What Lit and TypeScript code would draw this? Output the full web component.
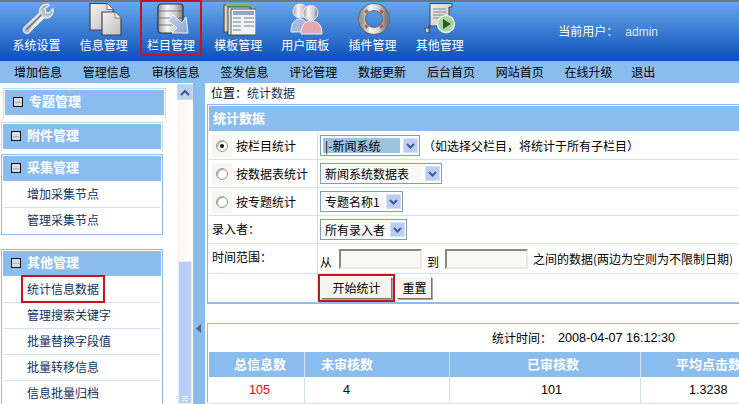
import { LitElement, html, css, svg } from "lit";
import { customElement } from "lit/decorators.js";

const defs = svg`<defs>
<linearGradient id="metal" x1="0" y1="0" x2="1" y2="0"><stop offset="0" stop-color="#9a9a9a"/><stop offset=".35" stop-color="#f6f6f6"/><stop offset=".7" stop-color="#cfcfcf"/><stop offset="1" stop-color="#7d7d7d"/></linearGradient>
<linearGradient id="page" x1="0" y1="0" x2="1" y2="1"><stop offset="0" stop-color="#f4f4f4"/><stop offset="1" stop-color="#bdbdbd"/></linearGradient>
<linearGradient id="wr" x1="0" y1="1" x2="1" y2="0"><stop offset="0" stop-color="#a9a9a9"/><stop offset=".5" stop-color="#e4e4e4"/><stop offset="1" stop-color="#8f8f8f"/></linearGradient>
<linearGradient id="arrow" x1="0" y1="0" x2="1" y2="1"><stop offset="0" stop-color="#c6d2ea"/><stop offset="1" stop-color="#8da3cc"/></linearGradient>
</defs>`;

const icons = [
  svg`<g transform="translate(3 .5) scale(.88)"><path d="M3 28 L20 12 C19 7 22 3 27 2 C29 1.700 30 2 31 3 L26 7 L27 11 L31 12 L35 7 C36 10 35 14 32 16 C29 18 27 18 25 17 L8 34 C6 36 3 35 2 33 C1 31 2 29 3 28Z" fill="url(#wr)" stroke="#e9eef5" stroke-width="1.500"/><path d="M5 31 L22 14" stroke="#6f6f6f" stroke-width="1.600" fill="none"/><path d="M8 32 L24 16" stroke="#fff" stroke-width="1" fill="none"/></g>`,
  svg`<path d="M4 1.500 H21 L27 7.500 V28 H4Z" fill="url(#page)" stroke="#444" stroke-width="1.200"/><path d="M21 1.500 V7.500 H27" fill="#fff" stroke="#777"/><path d="M16 10 H29 L35 16 V33 H16Z" fill="url(#page)" stroke="#444" stroke-width="1.200"/><path d="M29 10 V16 H35" fill="#fff" stroke="#777"/>`,
  svg`<rect x="5" y="2" width="25" height="29" rx="3" fill="url(#metal)" stroke="#333" stroke-width="1.200"/><path d="M5 9 H30 M5 16 H30 M5 23 H30" stroke="#666" stroke-width=".8"/><path d="M15 19 L20 13 L29 21 L33 15 L35 31 L19 31 L24 26Z" fill="url(#arrow)" stroke="#eef2f8" stroke-width="1"/>`,
  svg`<rect x="4" y="3" width="22" height="27" fill="#d8d3b8" stroke="#444"/><rect x="6" y="1" width="24" height="4" fill="#7fb474"/><rect x="8" y="5" width="22" height="28" fill="#dfe3e8" stroke="#444"/><rect x="11" y="7" width="25" height="26" fill="#f2f2f2" stroke="#555"/><rect x="13" y="9" width="21" height="4" fill="#8fa6c6"/><path d="M13 16 H21 M13 20 H21 M13 24 H21 M13 28 H21 M24 16 H34 M24 20 H34 M24 24 H34" stroke="#9aa" stroke-width="1.500"/>`,
  svg`<path d="M4 30 C4 21 8 17 13 17 C18 17 21 21 21 30Z" fill="#a8b8d6" stroke="#eee"/><circle cx="13" cy="9" r="7" fill="url(#metal)" stroke="#eee"/><path d="M14 32 C14 23 18 19 24 19 C31 19 35 23 35 32Z" fill="#e3a9ae" stroke="#eee"/><circle cx="23.500" cy="11" r="7.500" fill="url(#metal)" stroke="#eee"/>`,
  svg`<circle cx="19" cy="17" r="12" fill="none" stroke="#666" stroke-width="8"/><circle cx="19" cy="17" r="12" fill="none" stroke="url(#metal)" stroke-width="6"/><path d="M10.500 8.500 L12.500 10.500 M27.500 8.500 L25.500 10.500 M10.500 25.500 L12.500 23.500 M27.500 25.500 L25.500 23.500" stroke="#d34a4a" stroke-width="3.500"/>`,
  svg`<path d="M8 1.500 H30 V5 H27 V24 H7 V31 C4 31 2.500 29 3.500 26 H8Z" fill="url(#page)" stroke="#444"/><path d="M11 7 H24 M11 10 H24 M11 13 H22 M11 16 H19" stroke="#888"/><circle cx="24" cy="22" r="8.500" fill="#a9d6a0" stroke="#e8efe8" stroke-width="1.500"/><path d="M21 17 L29 22 L21 27Z" fill="#2c5b2a"/>`,
];

@customElement("app-root")
export class AppRoot extends LitElement {
  static styles = css`
    :host { display: block; width: 739px; height: 404px; overflow: hidden; font: 12px/1 "Noto Sans CJK SC", "Liberation Sans", sans-serif; color: #000; background: #fff; }
    .top { height: 59px; border-top: 2px solid #757575; background: linear-gradient(#67a7ea, #0c4fb9); display: flex; padding-left: 3px; color: #fff; }
    .tool { width: 67.200px; display: flex; justify-content: center; }
    .tool div { width: 62px; height: 54px; box-sizing: border-box; display: flex; flex-direction: column; align-items: center; }
    .tool .on { outline: 2px solid #c8141c; outline-offset: -2px; margin-top: -2px; padding-top: 2px; height: 56px; }
    .tool svg { width: 36px; height: 36px; display: block; flex: none; }
    .tool span { line-height: 14px; }
    .user { margin-left: 85px; margin-top: 22px; line-height: 14px; white-space: nowrap; }
    .user b { font: 12px "Liberation Sans", sans-serif; color: #dfe9fa; margin-left: 7px; }
    .sub { height: 22px; background: #8bbcee; display: flex; align-items: center; padding-left: 14px; gap: 20.800px; }
    .sub span:last-child { margin-left: -2px; }
    .main { display: flex; height: 321px; }
    .side { width: 177px; flex: none; height: 321px; overflow: hidden; }
    .panel { width: 162px; margin-left: 1px; border: 1px solid #8bbcee; padding: 1px; box-sizing: border-box; background: #fff; }
    .panel.cut { border-bottom: 0; height: 30px; border-color: #c3daf4; margin-top: 3px; }
    .panel.first { margin-left: 3px; margin-top: 5px; height: 31px; width: 163px; }
    .p3 { margin-top: 2px; }
    .p4 { margin-top: 14px; }
    .ph { height: 25px; box-sizing: content-box; background: #8bbcee; color: #fff; font: 700 13px/1 "Noto Sans CJK SC", sans-serif; display: flex; align-items: center; padding-left: 8px; gap: 6px; border-bottom: 1px solid #fff; }
    .ph > span { margin-top: -5px; }
    .ph i { width: 8px; height: 8px; border: 1px solid #111; background: linear-gradient(#aaa, #aaa) center/6px 1px no-repeat, #d5dbe8; display: block; margin-top: -1px; }
    .row { border-bottom: 1px solid #cfe3f8; padding: 0 0 2px 24px; box-sizing: content-box; height: 23px; display: flex; align-items: center; color: #11325f; }
    .row:last-child { border-bottom: 0; }
    .row span.mark { outline: 2px solid #c8141c; padding: 6px 4px; margin-left: -4px; }
    .bar { width: 16px; flex: none; background: linear-gradient(90deg, #f6f5f0, #fff); display: flex; flex-direction: column; height: 321px; }
    .up { height: 16px; margin-top: 1px; box-sizing: border-box; border: 1px solid #cad7f0; background: #bcd0f6; display: flex; align-items: center; justify-content: center; flex: none; }
    .thumb { margin-top: 161px; flex: 1; background: #b9cef7; border: 1px solid #e8eefb; margin-left: 1px; margin-right: 1px; display: flex; flex-direction: column; justify-content: flex-end; align-items: center; padding-bottom: 2px; gap: 1px; }
    .thumb u { display: block; width: 6px; height: 1px; background: #eef3fd; }
    .split { width: 12px; flex: none; background: #8bbcee; display: flex; align-items: flex-start; }
    .split svg { margin: 241px 0 0 3px; }
    .content { flex: 1; min-width: 0; overflow: hidden; padding: 0 0 0 2px; }
    .loc { height: 21px; display: flex; align-items: center; padding: 0 0 2px 4px; box-sizing: border-box; }
    .loc a { color: #11325f; }
    .form { width: 600px; border: 1px solid #8bbcee; padding: 1px 0 0 1px; box-sizing: border-box; height: 200px; border-bottom-width: 2px; }
    .title { background: #8bbcee; color: #fff; font: 700 13px/1 "Noto Sans CJK SC", sans-serif; display: flex; align-items: center; padding: 0 0 2px 4px; box-sizing: content-box; height: 23px; border-bottom: 1px solid #fff; }
    .fr { display: grid; grid-template-columns: 109px 1fr; border-bottom: 1px solid #cfe3f8; height: 27px; }
    .fr.tall { height: 29px; }
    .fr.last { border-bottom: 0; height: 29px; }
    .fr > div { display: flex; align-items: center; }
    .fr > div:first-child { border-right: 1px solid #cfe3f8; padding-left: 3px; }
    .fr > div:last-child { padding-left: 2px; gap: 5px; }
    .up1 { margin-top: -2px; }
    .up2 { margin-top: -4px; }
    .low { margin: 6px 2px 0 0; }
    .radiobox { width: 20px; height: 22px; background: #f7f6f2; display: flex; align-items: center; justify-content: center; margin-right: 4px; }
    .radio { width: 10px; height: 10px; border-radius: 50%; border: 1px solid #9a9a92; background: #fff; display: flex; align-items: center; justify-content: center; box-shadow: inset 1px 1px 1px #aaa; }
    .radio.on::after { content: ""; width: 4px; height: 4px; border-radius: 50%; background: #111; }
    .sel { display: inline-flex; height: 21px; box-sizing: border-box; border: 1px solid #7f9db9; padding: 2px 1px 2px 2px; align-items: stretch; background: #fff; flex: none; }
    .sel span { display: flex; align-items: center; padding-left: 2px; background: #f8f8f8; box-sizing: border-box; }
    .sel.hl span { background: #9dc3e0; }
    .sel i { width: 15px; margin-left: 3px; background: #b9cdf5; border: 1px solid #d6e1f8; box-sizing: border-box; display: flex; align-items: center; justify-content: center; }
    .w1 span { width: 77px; } .w2 span { width: 99px; } .w3 span { width: 60px; } .w4 span { width: 64px; }
    .note { margin-left: -2px; }
    .date { width: 83px; height: 20px; box-sizing: border-box; border: 2px solid; border-color: #8b8878 #ece9d8 #ece9d8 #8b8878; background: #f8f8f6; display: block; }
    .date + .low { margin-right: 1px; }
    .btnrow { align-items: flex-start !important; padding-top: 3px; }
    .btn { height: 22px; box-sizing: border-box; background: #f5f5f0; border: 1px solid; border-color: #f5f5f0 #77776a #77776a #f5f5f0; box-shadow: 1px 1px 0 #aaa; display: flex; align-items: center; justify-content: center; }
    .go { width: 71px; outline: 2px solid #c8141c; outline-offset: 1px; margin-left: 1px; }
    .reset { width: 35px; }
    .stat { margin-top: 19px; width: 600px; border: 1px solid #8bbcee; border-bottom: 0; padding: 1px 0 0 1px; box-sizing: border-box; height: 80px; }
    .time { height: 26px; display: flex; align-items: center; padding-left: 283px; gap: 6px; border-bottom: 1px solid #fff; }
    .time b { font: 12.600px "Liberation Sans", sans-serif; }
    .cols { display: grid; grid-template-columns: 96px 145px 191px 1fr; }
    .cols > div { display: flex; align-items: center; justify-content: flex-start; border-right: 1px solid #cfe3f8; box-sizing: border-box; }
    .cols.h > div { height: 26px; background: #8bbcee; color: #fff; font: 700 13px/1 "Noto Sans CJK SC", sans-serif; border-right-color: #d6e6f8; border-bottom: 1px solid #fff; padding-bottom: 3px; }
    .cols.b > div { height: 26px; border-bottom: 1px solid #cfe3f8; font-family: "Liberation Sans", sans-serif; font-size: 12.600px; }
    .h > div:nth-child(1) { padding-left: 25px; }
    .h > div:nth-child(2) { padding-left: 16px; }
    .h > div:nth-child(3) { padding-left: 77px; }
    .h > div:nth-child(4) { padding-left: 35px; }
    .b > div:nth-child(1) { padding-left: 40px; }
    .b > div:nth-child(2) { padding-left: 38px; }
    .b > div:nth-child(3) { padding-left: 91px; }
    .b > div:nth-child(4) { padding-left: 48px; }
    .red { color: #f00; }
  `;

  private arrow() {
    return html`<svg width="9" height="6" viewBox="0 0 9 6"><path d="M1 1 L4.500 4.500 L8 1" fill="none" stroke="#3f5a96" stroke-width="2"/></svg>`;
  }

  private tools = ["系统设置", "信息管理", "栏目管理", "模板管理", "用户面板", "插件管理", "其他管理"];
  private subs = ["增加信息", "管理信息", "审核信息", "签发信息", "评论管理", "数据更新", "后台首页", "网站首页", "在线升级", "退出"];

  render() {
    return html`
      <div class="top">
        ${this.tools.map((t, i) => html`<div class="tool"><div class=${i === 2 ? "on" : ""}><svg viewBox="0 0 36 36">${i === 0 ? defs : ""}${icons[i]}</svg><span>${t}</span></div></div>`)}
        <div class="user">当前用户：<b>admin</b></div>
      </div>
      <div class="sub">${this.subs.map((s) => html`<span>${s}</span>`)}</div>
      <div class="main">
        <div class="side">
          <div class="panel cut first"><div class="ph"><i></i><span>专题管理</span></div></div>
          <div class="panel cut"><div class="ph"><i></i><span>附件管理</span></div></div>
          <div class="panel p3"><div class="ph"><i></i><span>采集管理</span></div><div class="row">增加采集节点</div><div class="row">管理采集节点</div></div>
          <div class="panel p4"><div class="ph"><i></i><span>其他管理</span></div>
            <div class="row"><span class="mark">统计信息数据</span></div>
            <div class="row">管理搜索关键字</div><div class="row">批量替换字段值</div><div class="row">批量转移信息</div><div class="row">信息批量归档</div>
          </div>
        </div>
        <div class="bar">
          <div class="up"><svg width="10" height="7" viewBox="0 0 10 7"><path d="M1 6 L5 2 L9 6" fill="none" stroke="#3f5a86" stroke-width="2"/></svg></div>
          <div class="thumb"><u></u><u></u><u></u></div>
        </div>
        <div class="split"><svg width="5" height="9" viewBox="0 0 5 9"><path d="M5 0 V9 L0 4.500Z" fill="#55657a"/></svg></div>
        <div class="content">
          <div class="loc"><span>位置：</span><a>统计数据</a></div>
          <div class="form">
            <div class="title">统计数据</div>
            <div class="fr"><div><span class="radiobox"><span class="radio on"></span></span>按栏目统计</div><div><span class="sel hl w1"><span>|-新闻系统</span><i>${this.arrow()}</i></span><span class="note">（如选择父栏目，将统计于所有子栏目）</span></div></div>
            <div class="fr"><div><span class="radiobox"><span class="radio"></span></span>按数据表统计</div><div><span class="sel w2"><span>新闻系统数据表</span><i>${this.arrow()}</i></span></div></div>
            <div class="fr"><div><span class="radiobox"><span class="radio"></span></span>按专题统计</div><div><span class="sel w3"><span>专题名称1</span><i>${this.arrow()}</i></span></div></div>
            <div class="fr"><div><span class="up1">录入者：</span></div><div><span class="sel w4"><span>所有录入者</span><i>${this.arrow()}</i></span></div></div>
            <div class="fr tall"><div><span class="up2">时间范围：</span></div><div><span class="low">从</span><span class="date"></span><span class="low">到</span><span class="date"></span><span>之间的数据(两边为空则为不限制日期)</span></div></div>
            <div class="fr last"><div></div><div class="btnrow"><span class="btn go">开始统计</span><span class="btn reset">重置</span></div></div>
          </div>
          <div class="stat">
            <div class="time">统计时间：<b>2008-04-07 16:12:30</b></div>
            <div class="cols h"><div>总信息数</div><div>未审核数</div><div>已审核数</div><div>平均点击数</div></div>
            <div class="cols b"><div class="red">105</div><div>4</div><div>101</div><div>1.3238</div></div>
          </div>
        </div>
      </div>
    `;
  }
}
